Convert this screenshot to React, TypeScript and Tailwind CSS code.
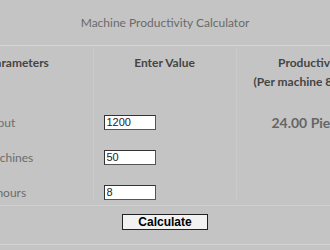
export default function App() {
  const rows = [
    { label: "Total Output", value: "1200" },
    { label: "No. of machines", value: "50" },
    { label: "Working hours", value: "8" },
  ];

  return (
    <div className="w-[330px] h-[250px] overflow-hidden bg-[#c4c4c4] flex justify-center font-['Lato',sans-serif]">
      <div className="w-[441px] shrink-0 flex flex-col">
        <div className="h-[46px] flex items-center justify-center text-[12px] text-[#6a6a6a] border-b border-[#d6d6d6]">
          Machine Productivity Calculator
        </div>

        <div className="grid grid-cols-[149px_143px_149px] mt-[2px]">
          {/* header */}
          <div className="border-r border-[#cbcbcb] pt-[5px] h-[57px] text-center font-bold text-[12px] leading-[19px] text-[#444]">
            Parameters
          </div>
          <div className="border-r border-[#cbcbcb] pt-[5px] text-center font-bold text-[12px] leading-[19px] text-[#444]">
            Enter Value
          </div>
          <div className="pt-[5px] text-center font-bold text-[12px] text-[#444] leading-[19px]">
            <div>Productivity</div>
            <div>(Per machine 8 hours)</div>
          </div>

          {/* labels */}
          <div className="h-[94px] border-r border-[#cbcbcb] flex flex-col text-[12px] text-[#6c6c6c]">
            {rows.map((r) => (
              <div key={r.label} className="h-[35px] shrink-0 flex items-center pl-[4px]">
                <span className="whitespace-nowrap">{r.label}</span>
              </div>
            ))}
          </div>

          {/* inputs */}
          <div className="h-[94px] border-r border-[#cbcbcb] flex flex-col">
            {rows.map((r) => (
              <div key={r.label} className="h-[35px] shrink-0 flex items-center pl-[10px]">
                <input
                  defaultValue={r.value}
                  className="w-[52px] h-[15px] bg-white border-[1.5px] border-t-[#333] border-l-[#333] border-b-[#555] border-r-[#555] px-[2px] text-[11px] text-[#222] font-['Liberation_Sans',Arial,sans-serif] outline-none"
                />
              </div>
            ))}
          </div>

          {/* result */}
          <div className="h-[94px] flex flex-col items-center">
            <div className="h-[35px] shrink-0 flex items-center font-bold text-[14px] text-[#666]">
              24.00 Pieces
            </div>
          </div>
        </div>

        <div className="mt-[6px] border-t border-[#cfcfcf] pt-[8px] pb-[14px] flex justify-center">
          <button className="w-[86px] h-[16px] bg-[#f2f2f2] border border-[#222] text-[12px] font-bold text-black leading-none font-['Liberation_Sans',Arial,sans-serif]">
            Calculate
          </button>
        </div>
        <div className="border-t border-[#d4d4d4]" />
      </div>
    </div>
  );
}
